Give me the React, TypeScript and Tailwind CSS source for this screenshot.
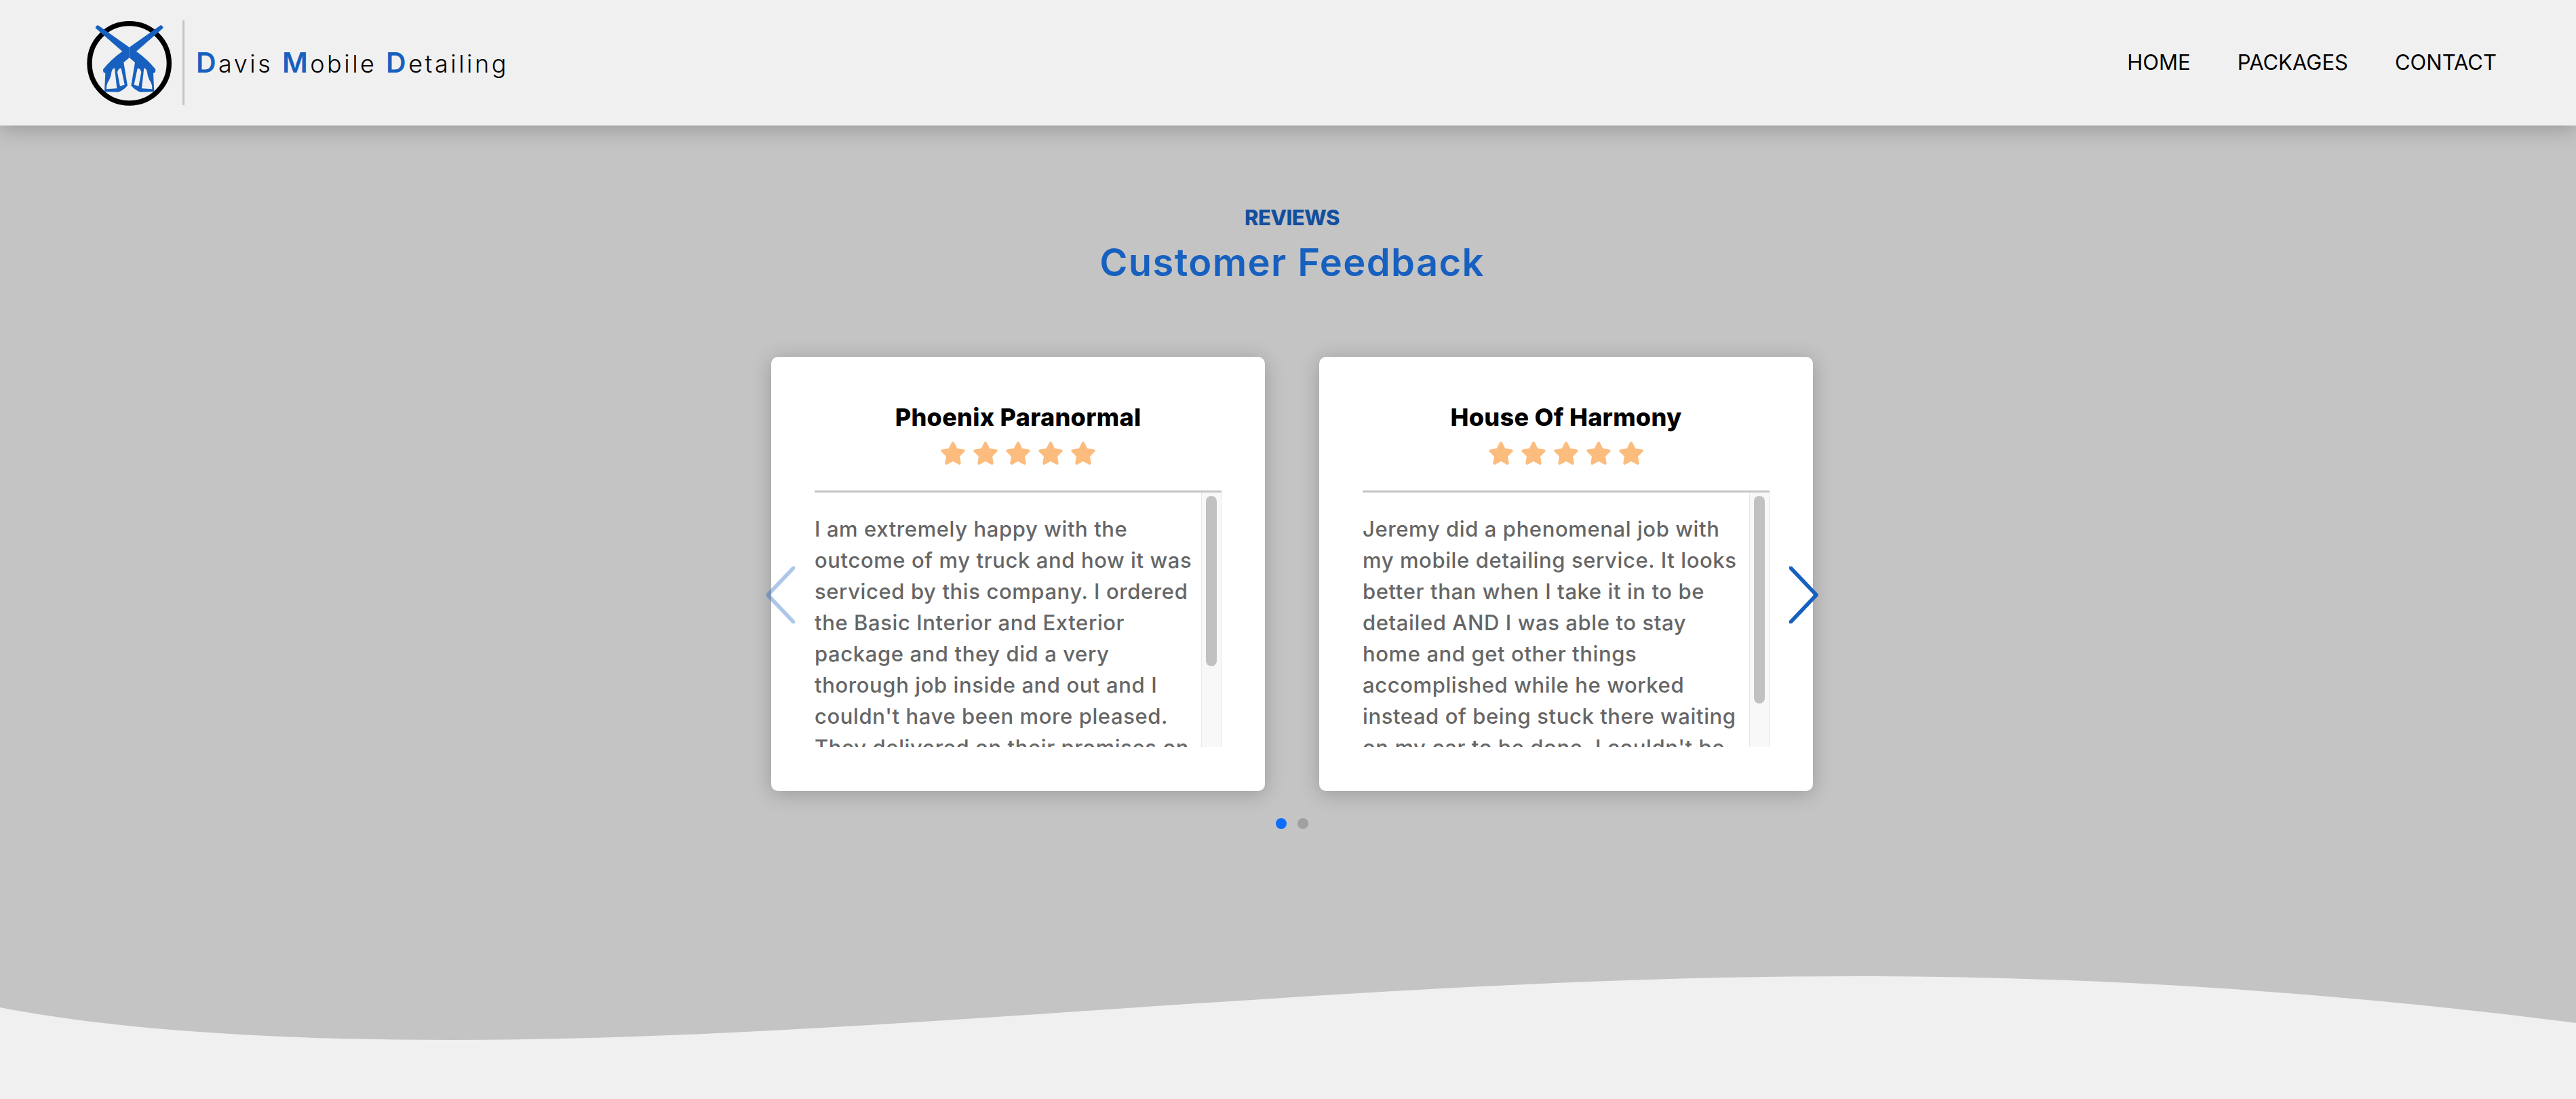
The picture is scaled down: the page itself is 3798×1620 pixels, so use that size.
import { FaStar } from "react-icons/fa";

const reviews = [
  {
    name: "Phoenix Paranormal",
    thumbHeight: "h-[251px]",
    lines: [
      "I am extremely happy with the",
      "outcome of my truck and how it was",
      "serviced by this company. I ordered",
      "the Basic Interior and Exterior",
      "package and they did a very",
      "thorough job inside and out and I",
      "couldn't have been more pleased.",
      "They delivered on their promises on",
    ],
  },
  {
    name: "House Of Harmony",
    thumbHeight: "h-[306px]",
    lines: [
      "Jeremy did a phenomenal job with",
      "my mobile detailing service. It looks",
      "better than when I take it in to be",
      "detailed AND I was able to stay",
      "home and get other things",
      "accomplished while he worked",
      "instead of being stuck there waiting",
      "on my car to be done. I couldn't be",
    ],
  },
];

function Logo() {
  const half =
    "M197 140 L335 43 Q345 44 347 55 L228 158 Q280 195 313 238 L312 250 L303 255 L307 337 L245 338 Q225 332 205 310 L222 207 L197 186 Z " +
    "M233 234 L218 305 L238 313 L250 250 Q243 231 233 234 Z " +
    "M262 232 Q272 234 276 250 Q278 275 292 295 Q300 310 298 325 L252 322 Z";
  return (
    <svg width="150" height="140" viewBox="0 0 450 420" className="shrink-0">
      <circle cx="197" cy="211" r="176" fill="none" stroke="#000" strokeWidth="22" />
      <path d={half} fill="#1760bf" fillRule="evenodd" />
      <path d={half} fill="#1760bf" fillRule="evenodd" transform="translate(394 0) scale(-1 1)" />
    </svg>
  );
}

function Chevron({ direction, className }: { direction: "left" | "right"; className: string }) {
  return (
    <svg width="43" height="84" viewBox="0 0 43 84" fill="none" className={className}>
      <path
        d={direction === "left" ? "M41 2 L3 42 L41 82" : "M2 2 L40 42 L2 82"}
        stroke="#1760bf"
        strokeWidth="5.5"
        strokeLinecap="round"
        strokeLinejoin="round"
      />
    </svg>
  );
}

function ReviewCard({ name, lines, thumbHeight }: (typeof reviews)[number]) {
  return (
    <div className="flex h-[640px] w-[728px] flex-col rounded-[10px] bg-white px-16 pt-[62px] shadow-[0_4px_30px_rgba(0,0,0,0.22)]">
      <h3 className="text-center text-[36px] leading-[54px] font-extrabold tracking-[0.3px] text-black">{name}</h3>
      <div className="mt-[9px] flex justify-center gap-[10px] text-[#fbbc7e]">
        {[0, 1, 2, 3, 4].map((i) => (
          <FaStar key={i} className="h-[34px] w-[38px]" />
        ))}
      </div>
      <div className="mt-[38px] flex h-[378px] border-t-[3px] border-[#c4c4c4]">
        <div className="flex-1 overflow-hidden pt-[31px] text-[31px] leading-[46px] font-medium text-[#666]">
          {lines.map((line) => (
            <p key={line} className="whitespace-nowrap tracking-[0.6px]">
              {line}
            </p>
          ))}
        </div>
        <div className="w-[30px] shrink-0 border-x border-[#e8e8e8] bg-[#f8f8f8] pt-[5px]">
          <div className={`mx-auto w-[16px] rounded-full bg-[#c1c1c1] ${thumbHeight}`} />
        </div>
      </div>
    </div>
  );
}

export default function App() {
  return (
    <div className="flex h-[1620px] flex-col overflow-hidden bg-[#c4c4c4] font-['Inter',sans-serif]">
      <header className="relative z-10 flex h-[185px] shrink-0 items-center justify-between bg-[#f0f0f0] pr-[117px] pl-[125px] shadow-[0_4px_30px_rgba(0,0,0,0.25)]">
        <div className="flex items-center">
          <Logo />
          <div className="ml-[-6px] h-[125px] w-[3px] bg-[#c4c4c4]" />
          <div className="ml-[17px] text-[36px] font-light tracking-[3.5px] text-black">
            <span className="text-[41px] font-semibold text-[#1760bf]">D</span>avis{" "}
            <span className="text-[41px] font-semibold text-[#1760bf]">M</span>obile{" "}
            <span className="text-[41px] font-semibold text-[#1760bf]">D</span>etailing
          </div>
        </div>
        <nav className="flex gap-[69px] text-[31px] text-black">
          <a>HOME</a>
          <a>PACKAGES</a>
          <a>CONTACT</a>
        </nav>
      </header>

      <main className="flex flex-1 flex-col items-center pt-[113px] pl-[12px]">
        <p className="text-[31px] leading-[46px] font-extrabold tracking-[-0.6px] text-[#134f9e]">REVIEWS</p>
        <h2 className="mt-[10px] text-[56px] leading-[66px] font-semibold tracking-[1.4px] text-[#1760bf]">Customer Feedback</h2>

        <div className="relative mt-[106px] flex gap-[80px]">
          {reviews.map((review) => (
            <ReviewCard key={review.name} {...review} />
          ))}
          <Chevron direction="left" className="absolute top-[309px] left-[-8px] opacity-35" />
          <Chevron direction="right" className="absolute top-[309px] right-[-8px]" />
        </div>

        <div className="mt-[40px] flex gap-[16px]">
          <span className="size-4 rounded-full bg-[#0d6efd]" />
          <span className="size-4 rounded-full bg-[#a0a0a0]" />
        </div>
      </main>

      <svg viewBox="0 0 3798 190" className="block w-full shrink-0" preserveAspectRatio="none">
        <path
          d="M0 55 C170 88 400 103 666 103 C1300 103 2000 9 2737 9 C3150 9 3500 40 3798 78 L3798 190 L0 190 Z"
          fill="#f0f0f0"
        />
      </svg>
    </div>
  );
}
